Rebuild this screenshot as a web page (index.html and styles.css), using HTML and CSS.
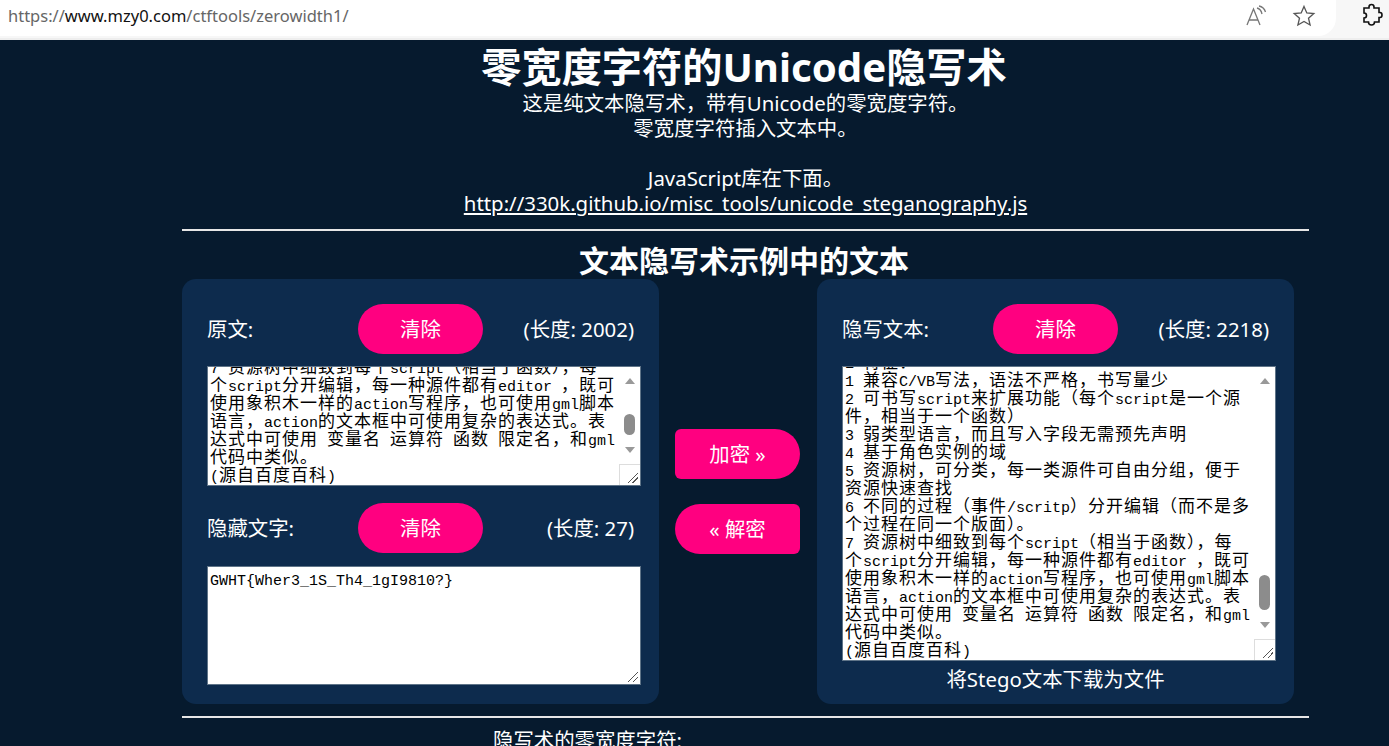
FILE: index.html

```html
<!DOCTYPE html>
<html lang="zh">
<head>
    <meta charset="UTF-8">
    <title>零宽度字符的Unicode隐写术</title>
    <link rel="stylesheet" href="styles.css">
</head>
<body>
<div class="topbar">
    <div class="addr">
        <div class="url">https://<b>www.mzy0.com</b>/ctftools/zerowidth1/</div>
        <svg class="tb-icon" width="24" height="24" viewBox="0 0 24 24" fill="none" stroke="#777" stroke-width="1.3"><path d="M3 21 L9.5 5 L16 21 M5.2 16 H13.8"/><path d="M13 4 Q17 5 18 10 M15 2 Q20 3 21.5 8"/></svg>
        <svg class="tb-icon" width="24" height="24" viewBox="0 0 24 24" fill="none" stroke="#555" stroke-width="1.3"><path d="M12 2.5 L14.8 9 L21.8 9.6 L16.5 14.2 L18.1 21 L12 17.4 L5.9 21 L7.5 14.2 L2.2 9.6 L9.2 9 Z"/></svg>
    </div>
    <svg class="ext" width="22" height="24" viewBox="0 0 22 24" fill="none" stroke="#111" stroke-width="1.6"><path d="M8 4 Q8 1.5 10.5 1.5 Q13 1.5 13 4 V5 H18 V9.5 H19 Q21 9.5 21 12 Q21 14.5 19 14.5 H18 V19 H13.5 Q13.5 22 10.5 22 Q7.5 22 7.5 19 H3 V15 Q5.5 15 5.5 12.5 Q5.5 10 3 10 V5 H8 Z"/></svg>
</div>

<div class="page">
    <h1>零宽度字符的Unicode隐写术</h1>
    <p class="intro">这是纯文本隐写术，带有Unicode的零宽度字符。<br>零宽度字符插入文本中。<br><br>JavaScript库在下面。<br><a href="#">http://330k.github.io/misc_tools/unicode_steganography.js</a></p>
    <hr>
    <h2>文本隐写术示例中的文本</h2>

    <div class="tool">
        <div class="panel">
            <div class="row">
                <span class="lbl">原文:</span>
                <button class="btn">清除</button>
                <span class="len">(长度: 2002)</span>
            </div>
            <div class="box box-plain">
                <div class="txt">
                    <div><i>7 </i>资源树中细致到每个<i>script</i>（相当于函数），每</div>
                    <div>个<i>script</i>分开编辑，每一种源件都有<i>editor </i>，既可</div>
                    <div>使用象积木一样的<i>action</i>写程序，也可使用<i>gml</i>脚本</div>
                    <div>语言，<i>action</i>的文本框中可使用复杂的表达式。表</div>
                    <div>达式中可使用<i> </i>变量名<i> </i>运算符<i> </i>函数<i> </i>限定名，和<i>gml</i></div>
                    <div>代码中类似。</div>
                    <div><i>(</i>源自百度百科<i>)</i></div>
                </div>
                <div class="bar">
                    <span class="up"></span>
                    <span class="track"><span class="thumb thumb-plain"></span></span>
                    <span class="down"></span>
                </div>
                <div class="corner"></div>
            </div>

            <div class="row row-hidden">
                <span class="lbl">隐藏文字:</span>
                <button class="btn">清除</button>
                <span class="len">(长度: 27)</span>
            </div>
            <div class="box box-hidden">
                <div class="txt">
                    <div><i>GWHT{Wher3_1S_Th4_1gI9810?}</i></div>
                </div>
                <div class="grip"></div>
            </div>
        </div>

        <div class="mid">
            <button class="btn btn-enc">加密 »</button>
            <button class="btn btn-dec">« 解密</button>
        </div>

        <div class="panel">
            <div class="row">
                <span class="lbl">隐写文本:</span>
                <button class="btn">清除</button>
                <span class="len">(长度: 2218)</span>
            </div>
            <div class="box box-stego">
                <div class="txt">
                    <div><i>1 </i>特征：</div>
                    <div><i>1 </i>兼容<i>C/VB</i>写法，语法不严格，书写量少</div>
                    <div><i>2 </i>可书写<i>script</i>来扩展功能（每个<i>script</i>是一个源</div>
                    <div>件，相当于一个函数）</div>
                    <div><i>3 </i>弱类型语言，而且写入字段无需预先声明</div>
                    <div><i>4 </i>基于角色实例的域</div>
                    <div><i>5 </i>资源树，可分类，每一类源件可自由分组，便于</div>
                    <div>资源快速查找</div>
                    <div><i>6 </i>不同的过程（事件<i>/scritp</i>）分开编辑（而不是多</div>
                    <div>个过程在同一个版面）。</div>
                    <div><i>7 </i>资源树中细致到每个<i>script</i>（相当于函数），每</div>
                    <div>个<i>script</i>分开编辑，每一种源件都有<i>editor </i>，既可</div>
                    <div>使用象积木一样的<i>action</i>写程序，也可使用<i>gml</i>脚本</div>
                    <div>语言，<i>action</i>的文本框中可使用复杂的表达式。表</div>
                    <div>达式中可使用<i> </i>变量名<i> </i>运算符<i> </i>函数<i> </i>限定名，和<i>gml</i></div>
                    <div>代码中类似。</div>
                    <div><i>(</i>源自百度百科<i>)</i></div>
                </div>
                <div class="bar">
                    <span class="up"></span>
                    <span class="track"><span class="thumb thumb-stego"></span></span>
                    <span class="down"></span>
                </div>
                <div class="corner"></div>
            </div>
            <a class="dl" href="#">将Stego文本下载为文件</a>
        </div>
    </div>

    <hr class="hr-low">
    <p class="foot">隐写术的零宽度字符:</p>
</div>
</body>
</html>
```

FILE: styles.css

```css
* {
    padding: 0;
    margin: 0;
    box-sizing: border-box;
}

html, body {
    height: 746px;
    overflow: hidden;
}

body {
    background: #061a2e;
    color: #fff;
    font-family: "Noto Sans", "Noto Sans CJK SC", sans-serif;
    font-size: 20.4px;
}

a {
    color: #fff;
}

/* browser bar */
.topbar {
    height: 40px;
    background: #f7f7f7;
    border-bottom: 2px solid #eee;
    display: flex;
    align-items: flex-start;
}

.addr {
    width: 1336px;
    height: 36px;
    background: #fff;
    border-bottom-right-radius: 18px;
    display: flex;
    align-items: center;
    gap: 24px;
    padding: 0 20px 5px 8px;
}

.url {
    flex: 1;
    font-size: 16.5px;
    line-height: 32px;
    color: #666;
}

.url b {
    font-weight: normal;
    color: #111;
}

.ext {
    margin: 3px 0 0 25px;
}

/* page */
.page {
    width: 1127px;
    margin-left: 182px;
    text-align: center;
}

h1 {
    font-size: 40.2px;
    line-height: 49px;
    margin-top: 2px;
    padding-right: 3px;
}

.intro {
    line-height: 25px;
}

hr {
    border: 0;
    height: 2px;
    background: #e6e6e6;
    margin-top: 13px;
}

h2 {
    font-size: 30px;
    line-height: 36px;
    margin-top: 12px;
    padding-right: 3px;
}

.tool {
    display: flex;
    width: 1112px;
}

.panel {
    width: 477px;
    height: 425px;
    background: #0d2b4d;
    border-radius: 14px;
    padding: 25px 25px 0;
}

.mid {
    width: 158px;
    padding: 150px 0 0 16px;
    display: flex;
    flex-direction: column;
    align-items: flex-start;
    gap: 25px;
}

.row {
    display: grid;
    grid-template-columns: 1fr 125px 1fr;
    align-items: center;
    height: 50px;
    margin-bottom: 12px;
}

.row-hidden {
    margin-top: 17px;
    margin-bottom: 13px;
}

.lbl {
    text-align: left;
    padding-bottom: 3px;
}

.len {
    text-align: right;
    padding-bottom: 3px;
}

.btn {
    width: 125px;
    height: 50px;
    border: 0;
    border-radius: 25px;
    background: #ff0080;
    color: #fff;
    font: inherit;
    padding-bottom: 2px;
}

.btn-enc {
    border-radius: 6px 25px 25px 6px;
}

.btn-dec {
    border-radius: 25px 6px 6px 25px;
}

/* the text areas */
.box {
    width: 434px;
    background: #fff;
    border: 1px solid #5f7488;
    color: #000;
    position: relative;
    overflow: hidden;
    text-align: left;
    display: flex;
    flex-direction: column;
    justify-content: flex-end;
}

.box-plain {
    height: 120px;
}

.box-hidden {
    height: 119px;
    justify-content: flex-start;
}

.box-stego {
    height: 295px;
}

.txt {
    padding: 2px 2px;
    font-family: "Noto Sans CJK SC", sans-serif;
    font-size: 17px;
    letter-spacing: 1px;
    line-height: 18px;
}

.txt div {
    white-space: pre;
    height: 18px;
}

.txt i {
    font-family: "Liberation Mono", monospace;
    font-style: normal;
    font-size: 15px;
    letter-spacing: 0;
}

.bar {
    position: absolute;
    top: 0;
    right: 0;
    bottom: 21px;
    width: 21px;
    background: #fff;
    display: flex;
    flex-direction: column;
    align-items: center;
}

.up, .down {
    width: 0;
    height: 0;
    border-left: 5px solid transparent;
    border-right: 5px solid transparent;
    margin: 11px 0;
}

.up {
    border-bottom: 6px solid #999;
}

.down {
    border-top: 6px solid #999;
}

.track {
    flex: 1;
    width: 11px;
    position: relative;
}

.thumb {
    position: absolute;
    left: 0;
    width: 11px;
    background: #8c8c8c;
    border-radius: 6px;
}

.thumb-plain {
    top: 19px;
    height: 21px;
}

.thumb-stego {
    top: 180px;
    height: 35px;
}

.corner {
    position: absolute;
    right: 0;
    bottom: 0;
    width: 21px;
    height: 21px;
    background: #fff;
    border: 1px solid #ddd;
    border-right: 0;
    border-bottom: 0;
}

.corner::after, .grip::after {
    content: "";
    position: absolute;
    right: 2px;
    bottom: 2px;
    width: 10px;
    height: 10px;
    background: linear-gradient(135deg, transparent 46%, #555 46%, #555 54%, transparent 54%, transparent 70%, #555 70%, #555 78%, transparent 78%);
}

.grip {
    position: absolute;
    right: 0;
    bottom: 0;
    width: 14px;
    height: 14px;
}

.dl {
    display: block;
    margin-top: 5px;
    line-height: 27px;
    text-decoration: none;
}

.hr-low {
    margin-top: 12px;
}

.foot {
    width: 500px;
    margin-top: 9px;
    line-height: 27px;
    text-align: right;
}
```
